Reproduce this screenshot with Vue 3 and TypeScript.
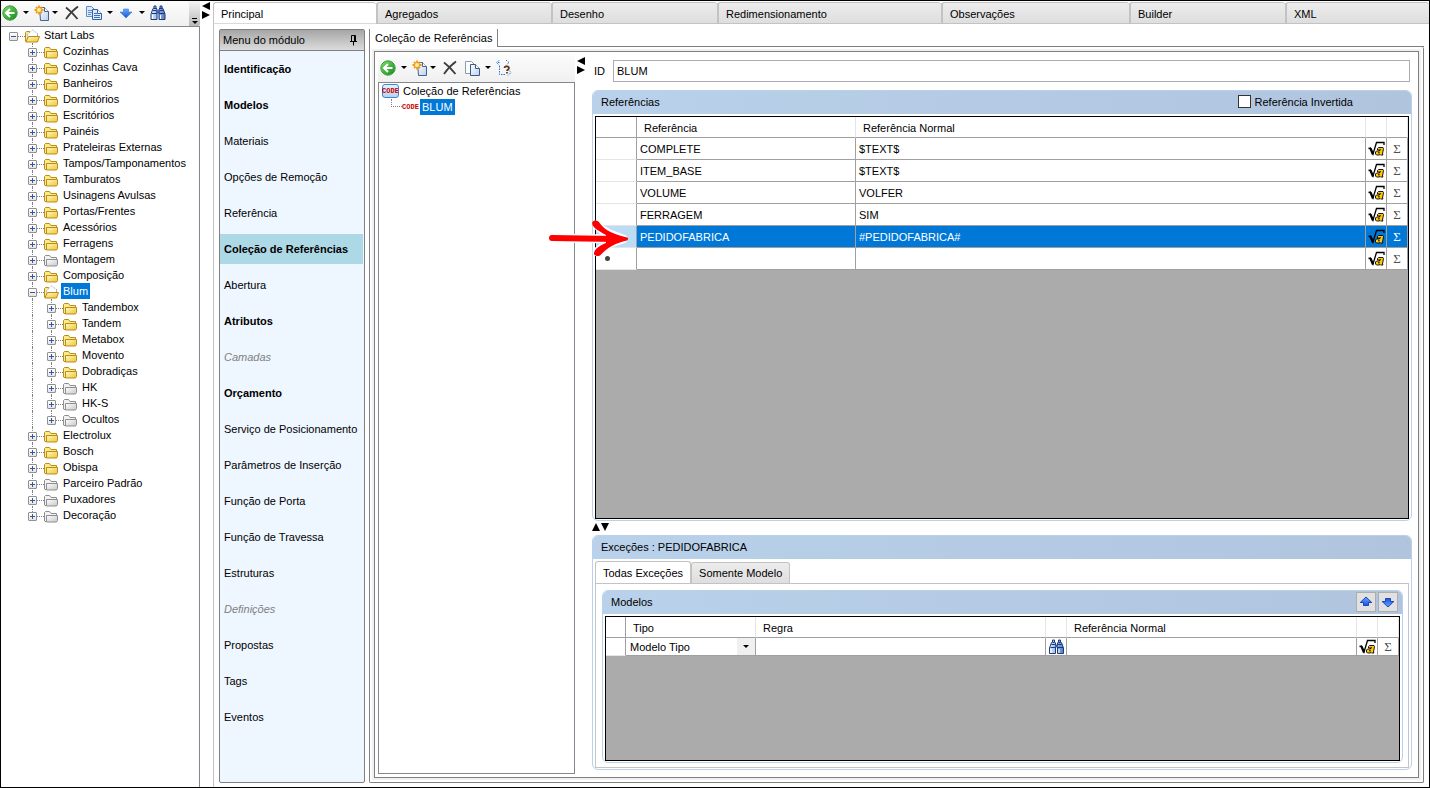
<script setup lang="ts">
import { ref } from 'vue'

interface TreeNode {
  label: string
  level: number
  icon: string
  open?: boolean
  last?: boolean
}

interface MenuItem {
  label: string
  kind?: 'bold' | 'muted'
}

interface RefRow {
  name: string
  value: string
}

const folder = (label: string, level = 1, icon = 'i-folder'): TreeNode => ({ label, level, icon })

const tree: TreeNode[] = [
  { label: 'Start Labs', level: 0, icon: 'i-folder-open', open: true },
  folder('Cozinhas'),
  folder('Cozinhas Cava'),
  folder('Banheiros'),
  folder('Dormitórios'),
  folder('Escritórios'),
  folder('Painéis'),
  folder('Prateleiras Externas'),
  folder('Tampos/Tamponamentos'),
  folder('Tamburatos'),
  folder('Usinagens Avulsas'),
  folder('Portas/Frentes'),
  folder('Acessórios'),
  folder('Ferragens'),
  folder('Montagem', 1, 'i-folder-gray'),
  folder('Composição'),
  { label: 'Blum', level: 1, icon: 'i-folder-open', open: true },
  folder('Tandembox', 2),
  folder('Tandem', 2),
  folder('Metabox', 2),
  folder('Movento', 2),
  folder('Dobradiças', 2),
  folder('HK', 2, 'i-folder-gray'),
  folder('HK-S', 2, 'i-folder-gray'),
  { label: 'Ocultos', level: 2, icon: 'i-folder-gray', last: true },
  folder('Electrolux'),
  folder('Bosch'),
  folder('Obispa'),
  folder('Parceiro Padrão', 1, 'i-folder-gray'),
  folder('Puxadores', 1, 'i-folder-gray'),
  { label: 'Decoração', level: 1, icon: 'i-folder-gray', last: true },
]
const selectedNode = ref('Blum')

const tabs = ['Principal', 'Agregados', 'Desenho', 'Redimensionamento', 'Observações', 'Builder', 'XML']
const activeTab = ref('Principal')

const menu: MenuItem[] = [
  { label: 'Identificação', kind: 'bold' },
  { label: 'Modelos', kind: 'bold' },
  { label: 'Materiais' },
  { label: 'Opções de Remoção' },
  { label: 'Referência' },
  { label: 'Coleção de Referências', kind: 'bold' },
  { label: 'Abertura' },
  { label: 'Atributos', kind: 'bold' },
  { label: 'Camadas', kind: 'muted' },
  { label: 'Orçamento', kind: 'bold' },
  { label: 'Serviço de Posicionamento' },
  { label: 'Parâmetros de Inserção' },
  { label: 'Função de Porta' },
  { label: 'Função de Travessa' },
  { label: 'Estruturas' },
  { label: 'Definições', kind: 'muted' },
  { label: 'Propostas' },
  { label: 'Tags' },
  { label: 'Eventos' },
]
const activeMenu = ref('Coleção de Referências')

const rows: RefRow[] = [
  { name: 'COMPLETE', value: '$TEXT$' },
  { name: 'ITEM_BASE', value: '$TEXT$' },
  { name: 'VOLUME', value: 'VOLFER' },
  { name: 'FERRAGEM', value: 'SIM' },
  { name: 'PEDIDOFABRICA', value: '#PEDIDOFABRICA#' },
  { name: '', value: '' },
]
const selectedRow = ref(4)

const collectionId = ref('BLUM')
const inverted = ref(false)
const modelType = ref('Modelo Tipo')
const exceptionTab = ref('Todas Exceções')
</script>

<template>
  <div class="window">
    <svg class="defs" aria-hidden="true">
      <defs>
        <linearGradient id="g-green" x1="0" y1="0" x2="1" y2="1">
          <stop offset="0" stop-color="#7fdc6a" /><stop offset="1" stop-color="#128a1c" />
        </linearGradient>
        <linearGradient id="g-folder" x1="0" y1="0" x2="1" y2="1">
          <stop offset="0" stop-color="#fffbc0" /><stop offset="1" stop-color="#f0c234" />
        </linearGradient>
        <linearGradient id="g-gray" x1="0" y1="0" x2="1" y2="1">
          <stop offset="0" stop-color="#ffffff" /><stop offset="1" stop-color="#c6c6c6" />
        </linearGradient>
        <linearGradient id="g-page" x1="0" y1="0" x2="1" y2="1">
          <stop offset="0" stop-color="#ffffff" /><stop offset="1" stop-color="#b9d0f0" />
        </linearGradient>
        <linearGradient id="g-blue" x1="0" y1="0" x2="0" y2="1">
          <stop offset="0" stop-color="#6aa6f5" /><stop offset="1" stop-color="#1757d6" />
        </linearGradient>
        <linearGradient id="g-bino" x1="0" y1="0" x2="1" y2="0">
          <stop offset="0" stop-color="#dcebfd" /><stop offset="1" stop-color="#4f7fc8" />
        </linearGradient>
      </defs>
      <symbol id="i-back" viewBox="0 0 16 16">
        <circle cx="8" cy="8" r="7.2" fill="url(#g-green)" stroke="#3b9b3a" />
        <path d="M12.5 8H4.5M8 4L4 8l4 4" fill="none" stroke="#fff" stroke-width="2" />
      </symbol>
      <symbol id="i-new" viewBox="0 0 16 16">
        <path d="M5.500 2.500h5l4 4v9h-8z" fill="url(#g-page)" stroke="#4a6487" />
        <path d="M10.500 2.500v4h4" fill="#fff" stroke="#4a6487" />
        <path d="M5 .500v9M.500 5h9M2 2l6 6M8 2L2 8" stroke="#f09a1c" stroke-width="1.800" />
        <circle cx="5" cy="5" r="2" fill="#fff3a0" />
      </symbol>
      <symbol id="i-x" viewBox="0 0 16 16">
        <path d="M2 2.500C6 5.500 10 9.500 13.500 14M14 1.500C9 5 5 9.500 2 14" fill="none" stroke="#3d3d3d" stroke-width="1.800" />
      </symbol>
      <symbol id="i-copy" viewBox="0 0 16 16">
        <path d="M.500 1.500h5l3 3v7h-8z" fill="#dce9fb" stroke="#5f8fcb" />
        <path d="M2 5.500h4M2 7.500h4M2 9.500h3" stroke="#5f8fcb" />
        <path d="M6.500 4.500h5l4 4v6h-9z" fill="#dce9fb" stroke="#2f62aa" />
        <path d="M11.500 4.500v4h4" fill="#fff" stroke="#2f62aa" />
        <path d="M8 8.500h3M8 10.500h6M8 12.500h6" stroke="#3c70b5" />
      </symbol>
      <symbol id="i-pages" viewBox="0 0 16 16">
        <path d="M1.500 1.500h6l3 3v9h-9z" fill="#fff" stroke="#8a9cb4" />
        <path d="M6.500 4.500h5l4 4v7h-9z" fill="url(#g-page)" stroke="#3f5a80" />
        <path d="M11.500 4.500v4h4" fill="#fff" stroke="#3f5a80" />
      </symbol>
      <symbol id="i-arrow" viewBox="0 0 16 16">
        <path d="M5.500 4h5v3h3.500L8 13 2 7h3.500z" fill="url(#g-blue)" stroke="#3c7be0" stroke-width=".6" />
      </symbol>
      <symbol id="i-bino" viewBox="0 0 16 16">
        <path d="M4 1h2v2l1 1v10.500H1V9l2-5.500 1-.5zM10 1h2v2l1 .500L15 9v5.500H9V4l1-1z" fill="url(#g-bino)" stroke="#1d3a7c" />
        <path d="M6.500 5.500h3v3h-3z" fill="#3a5fa8" />
        <path d="M3 5.500h3.500M2 8.500h5M9.500 5.500H13M9 8.500h5.500M4 3.500h2M10 3.500h2" stroke="#1d3a7c" />
        <path d="M2.500 10v4M10.500 10v4" stroke="#fff" />
      </symbol>
      <symbol id="i-find" viewBox="0 0 16 16">
        <g fill="none" stroke="#2f73dc" stroke-dasharray="1.500 1">
          <path d="M3.500 0L.500 2.500l3 3M10 0l3 2.500-3 3M3.500 2.500H2M3.500 6v8.500H9M12 9.500l3 3-3 3" />
        </g>
        <path d="M8.500 8c0-2.300 4.500-2.300 4.500.200 0 1.300-2 1.300-2 2.800M11 12v1.500" fill="none" stroke="#5c3418" stroke-width="1.700" />
      </symbol>
      <symbol id="i-folder" viewBox="0 0 16 16">
        <path d="M1.500 14V5.500l1-1h4l1.500 2h5.500V14.500H2z" fill="#fbe98a" stroke="#b98d1a" />
        <path d="M3.500 8.500h11v5l-1 1.500H3.500z" fill="url(#g-folder)" stroke="#b98d1a" />
      </symbol>
      <symbol id="i-folder-gray" viewBox="0 0 16 16">
        <path d="M1.500 14V5.500l1-1h4l1.500 2h5.500V14.500H2z" fill="#f2f2f2" stroke="#8e8e8e" />
        <path d="M3.500 8.500h11v5l-1 1.500H3.500z" fill="url(#g-gray)" stroke="#8e8e8e" />
      </symbol>
      <symbol id="i-folder-open" viewBox="0 0 16 16">
        <path d="M1.500 14V5.500l1-1h3l1.500 2h6.500V14.500H2z" fill="#fbe98a" stroke="#b98d1a" />
        <path d="M3.500 7.500l5-4.500 5 3.500v4h-10z" fill="#fff" stroke="#8f9cb8" stroke-dasharray="1 1" />
        <path d="M4.500 9.500h11L13.500 15H1.800z" fill="url(#g-folder)" stroke="#b98d1a" />
      </symbol>
      <symbol id="i-sqrt" viewBox="0 0 17 16">
        <path d="M.500 7.500l2-.500 2.500 6L8.500 1.500H16V4" fill="none" stroke="#000" stroke-width="1.300" />
        <path d="M2.500 7.500l2.500 6" stroke="#000" stroke-width="2.200" />
        <path d="M9.500 7.500l1-1h4.500l.500 1-1 5.500.500 1h-2.500l-.500-.500-1 .500H8.500L7.500 13v-2l1-1h3v-1h-2z" fill="#ffc90e" stroke="#000" stroke-width=".9" />
        <path d="M10 11.800h1.800M11.500 8.800h1.500" stroke="#000" />
      </symbol>
      <symbol id="i-pin" viewBox="0 0 9 12">
        <path d="M2.500 7V1.500h4V7M1 7.500h7M4.500 8v3.500M5.500 2v5" fill="none" stroke="#000" />
      </symbol>
      <symbol id="i-move" viewBox="0 0 14 14">
        <path d="M7 2l5.800 5.500H9.500V10.500h-5v-3H1.200z" fill="url(#g-blue)" stroke="#1238c0" stroke-width=".9" />
      </symbol>
    </svg>

    <aside class="explorer">
      <div class="toolbar">
        <button type="button" class="tool" aria-label="Voltar"><svg><use href="#i-back" /></svg></button>
        <button type="button" class="caret" aria-label="Histórico"></button>
        <button type="button" class="tool" aria-label="Novo"><svg><use href="#i-new" /></svg></button>
        <button type="button" class="caret tight" aria-label="Opções de novo"></button>
        <button type="button" class="tool remove" aria-label="Excluir"><svg><use href="#i-x" /></svg></button>
        <button type="button" class="tool" aria-label="Copiar"><svg><use href="#i-copy" /></svg></button>
        <button type="button" class="caret" aria-label="Opções de cópia"></button>
        <button type="button" class="tool" aria-label="Descer"><svg><use href="#i-arrow" /></svg></button>
        <button type="button" class="caret" aria-label="Opções de ordem"></button>
        <button type="button" class="tool" aria-label="Localizar"><svg><use href="#i-bino" /></svg></button>
        <button type="button" class="overflow" aria-label="Mais"></button>
      </div>
      <ul class="tree" role="tree">
        <li
          v-for="node in tree"
          :key="node.label"
          class="node"
          role="treeitem"
          :class="{ last: node.last, root: node.level === 0 }"
        >
          <span v-if="node.level > 0" class="guide"></span>
          <span v-if="node.level > 1" class="guide line"></span>
          <span class="guide branch">
            <button type="button" class="expander" :class="{ open: node.open }" :aria-label="'Expandir ' + node.label"></button>
          </span>
          <svg class="node-icon"><use :href="'#' + node.icon" /></svg>
          <span class="label" :class="{ selected: node.label === selectedNode }" @click="selectedNode = node.label">{{ node.label }}</span>
        </li>
      </ul>
    </aside>

    <div class="splitter"><i class="tri left"></i><i class="tri right"></i></div>

    <main class="module">
      <div class="tabs" role="tablist">
        <button
          v-for="tab in tabs"
          :key="tab"
          type="button"
          role="tab"
          class="tab"
          :class="{ active: tab === activeTab }"
          @click="activeTab = tab"
        >{{ tab }}</button>
      </div>

      <div class="body">
        <nav class="menu">
          <header class="menu-head">
            <span>Menu do módulo</span>
            <button type="button" class="pin" aria-label="Fixar"><svg><use href="#i-pin" /></svg></button>
          </header>
          <ul>
            <li v-for="item in menu" :key="item.label">
              <button
                type="button"
                :class="[item.kind, { active: item.label === activeMenu }]"
                @click="activeMenu = item.label"
              >{{ item.label }}</button>
            </li>
          </ul>
        </nav>

        <section class="page">
          <div class="page-tabs">
            <button type="button" class="page-tab">Coleção de Referências</button>
            <span class="page-rule"></span>
          </div>
          <div class="frame">
            <div class="frame-inner">
              <div class="collections">
                <div class="toolbar wide">
                  <button type="button" class="tool" aria-label="Voltar"><svg><use href="#i-back" /></svg></button>
                  <button type="button" class="caret" aria-label="Histórico"></button>
                  <button type="button" class="tool" aria-label="Novo"><svg><use href="#i-new" /></svg></button>
                  <button type="button" class="caret tight" aria-label="Opções de novo"></button>
                  <button type="button" class="tool remove" aria-label="Excluir"><svg><use href="#i-x" /></svg></button>
                  <button type="button" class="tool" aria-label="Copiar"><svg><use href="#i-pages" /></svg></button>
                  <button type="button" class="caret" aria-label="Opções de cópia"></button>
                  <button type="button" class="tool" aria-label="Localizar uso"><svg><use href="#i-find" /></svg></button>
                </div>
                <ul class="code-tree">
                  <li>
                    <span class="code boxed">CODE</span>
                    <span class="label">Coleção de Referências</span>
                  </li>
                  <li class="child">
                    <span class="elbow"></span>
                    <span class="code">CODE</span>
                    <span class="label selected">BLUM</span>
                  </li>
                </ul>
              </div>

              <div class="splitter inner"><i class="tri left"></i><i class="tri right"></i></div>

              <div class="detail">
                <div class="id-row">
                  <label for="collection-id">ID</label>
                  <input id="collection-id" v-model="collectionId" type="text" />
                </div>

                <section class="group grow">
                  <header class="group-head">
                    <span>Referências</span>
                    <label class="check"><input v-model="inverted" type="checkbox" />Referência Invertida</label>
                  </header>
                  <div class="grid">
                    <table class="refs">
                      <colgroup>
                        <col class="c-head" /><col class="c-name" /><col /><col class="c-icon" /><col class="c-icon" />
                      </colgroup>
                      <thead>
                        <tr><th></th><th>Referência</th><th>Referência Normal</th><th></th><th></th></tr>
                      </thead>
                      <tbody>
                        <tr v-for="(row, i) in rows" :key="i" :class="{ selected: i === selectedRow }" @click="selectedRow = i">
                          <td class="row-head">
                            <span v-if="i === rows.length - 1" class="new-mark"></span>
                            <svg v-if="i === selectedRow" class="pointer" viewBox="0 0 80 36" aria-hidden="true">
                              <g fill="none" stroke="#fff" stroke-width="9" stroke-linecap="round" stroke-linejoin="round">
                                <path d="M4 18L66 19M48 5C54 12 62 15 74 19C63 22 55 25 48 32" />
                              </g>
                              <path d="M3 18L66 19" fill="none" stroke="#f00" stroke-width="6" stroke-linecap="round" />
                              <path d="M43.500 2c2-2.500 6-1.500 7.500 1.500C56 10.500 65 14.500 78 17.500c1.500.500 1.500 2 0 3C67 23 59 27 51.500 35c-2 2-7 1-6.500-2C46 28 52 25 57 23v-8C52 12 41 7 43.500 2z" fill="#f00" />
                            </svg>
                          </td>
                          <td>{{ row.name }}</td>
                          <td>{{ row.value }}</td>
                          <td class="icon"><button type="button" aria-label="Fórmula"><svg><use href="#i-sqrt" /></svg></button></td>
                          <td class="icon"><button type="button" class="sigma">Σ</button></td>
                        </tr>
                      </tbody>
                    </table>
                  </div>
                </section>

                <div class="h-splitter"><i class="tri up"></i><i class="tri down"></i></div>

                <section class="group">
                  <header class="group-head"><span>Exceções : PEDIDOFABRICA</span></header>
                  <div class="sub-tabs" role="tablist">
                    <button
                      v-for="name in ['Todas Exceções', 'Somente Modelo']"
                      :key="name"
                      type="button"
                      role="tab"
                      :class="{ active: name === exceptionTab }"
                      @click="exceptionTab = name"
                    >{{ name }}</button>
                  </div>
                  <div class="pane">
                    <section class="group">
                      <header class="group-head">
                        <span>Modelos</span>
                        <span class="movers">
                          <button type="button" aria-label="Mover para cima"><svg><use href="#i-move" /></svg></button>
                          <button type="button" class="flip" aria-label="Mover para baixo"><svg><use href="#i-move" /></svg></button>
                        </span>
                      </header>
                      <div class="grid short">
                        <table class="models">
                          <colgroup>
                            <col class="c-slim" /><col class="c-type" /><col /><col class="c-icon" /><col /><col class="c-icon" /><col class="c-icon" />
                          </colgroup>
                          <thead>
                            <tr><th></th><th>Tipo</th><th>Regra</th><th></th><th>Referência Normal</th><th></th><th></th></tr>
                          </thead>
                          <tbody>
                            <tr>
                              <td class="row-head"></td>
                              <td class="pick">
                                <div class="pick-box">
                                  <select v-model="modelType" aria-label="Tipo"><option>Modelo Tipo</option></select>
                                  <span class="pick-caret"></span>
                                </div>
                              </td>
                              <td></td>
                              <td class="icon"><button type="button" aria-label="Localizar regra"><svg><use href="#i-bino" /></svg></button></td>
                              <td></td>
                              <td class="icon"><button type="button" aria-label="Fórmula"><svg><use href="#i-sqrt" /></svg></button></td>
                              <td class="icon"><button type="button" class="sigma">Σ</button></td>
                            </tr>
                          </tbody>
                        </table>
                      </div>
                    </section>
                  </div>
                </section>
              </div>
            </div>
          </div>
        </section>
      </div>
    </main>
  </div>
</template>

<style>
body {
  margin: 0;
  background: #fff;
}
</style>

<style scoped>
*,
*::before,
*::after {
  box-sizing: border-box;
}
.window {
  display: flex;
  min-height: 100vh;
  border: 1px solid #000;
  background: #fff;
  color: #000;
  font: 11px/16px "Liberation Sans", Arial, sans-serif;
}
.defs {
  position: absolute;
  width: 0;
  height: 0;
}
ul {
  list-style: none;
  margin: 0;
  padding: 0;
}
button,
input,
select {
  font: inherit;
  color: inherit;
}
button {
  margin: 0;
  padding: 0;
  border: 0;
  background: none;
}

/* Toolbars */
.toolbar {
  display: flex;
  align-items: center;
  height: 25px;
  padding: 0 0 2px 1px;
  background: linear-gradient(#fcfcfc, #f0f0f0);
}
.toolbar.wide {
  height: 27px;
  padding-left: 2px;
}
.tool,
.tool svg {
  display: block;
  flex: none;
  width: 16px;
  height: 16px;
}
.tool.remove {
  margin: 0 6px 0 4px;
}
.caret {
  display: flex;
  justify-content: center;
  align-items: center;
  flex: none;
  width: 16px;
  height: 16px;
}
.caret.tight {
  width: 10px;
}
.caret::before,
.overflow::after,
.pick-caret::before {
  content: "";
  border: 3px solid transparent;
  border-top-color: #000;
  border-bottom: 0;
}
.overflow {
  display: flex;
  flex-direction: column;
  justify-content: flex-end;
  align-items: center;
  align-self: flex-start;
  gap: 2px;
  width: 11px;
  height: 25px;
  margin-left: auto;
  padding-bottom: 2px;
  border-radius: 0 2px 2px 0;
  background: linear-gradient(#f4f4f4, #b8b8b8);
}
.overflow::before {
  content: "";
  width: 5px;
  height: 1px;
  background: #000;
}

/* Explorer */
.explorer {
  display: flex;
  flex-direction: column;
  flex: none;
  width: 199px;
}
.tree {
  flex: 1;
  border-top: 1px solid #828790;
  border-right: 1px solid #828790;
  padding-left: 3px;
}
.node {
  display: flex;
  height: 16px;
}
.guide {
  position: relative;
  flex: none;
  width: 19px;
}
.guide.line::before,
.guide.branch::before {
  content: "";
  position: absolute;
  left: 9px;
  top: 0;
  bottom: 0;
  border-left: 1px dotted #808080;
}
.last .guide.branch::before {
  bottom: 7px;
}
.root .guide.branch::before {
  display: none;
}
.guide.branch::after {
  content: "";
  position: absolute;
  left: 14px;
  right: -2px;
  top: 9px;
  border-top: 1px dotted #808080;
}
.expander {
  position: absolute;
  left: 5px;
  top: 5px;
  width: 9px;
  height: 9px;
  border: 1px solid #919191;
  border-radius: 1px;
  background:
    linear-gradient(#3a55a0, #3a55a0) center / 5px 1px no-repeat,
    linear-gradient(#3a55a0, #3a55a0) center / 1px 5px no-repeat,
    linear-gradient(#fff, #e4e4e4);
}
.expander.open {
  background:
    linear-gradient(#3a55a0, #3a55a0) center / 5px 1px no-repeat,
    linear-gradient(#fff, #e4e4e4);
}
.node-icon {
  flex: none;
  width: 16px;
  height: 16px;
  margin-left: 1px;
}
.label {
  padding: 0 2px;
  white-space: nowrap;
}
.node .label {
  margin-left: 2px;
}
.label.selected {
  background: #0078d7;
  color: #fff;
}

/* Splitters */
.splitter {
  display: flex;
  flex-direction: column;
  flex: none;
  width: 13px;
  padding: 1px 0 0 2px;
}
.splitter.inner {
  width: 17px;
  padding-top: 2px;
}
.tri {
  display: block;
  width: 0;
  height: 0;
  border: 4px solid transparent;
}
.tri.left {
  border-right: 8px solid #000;
  border-left: 0;
}
.tri.right {
  margin-top: 1px;
  border-left: 8px solid #000;
  border-right: 0;
}
.tri.up {
  border-bottom: 8px solid #000;
  border-top: 0;
}
.tri.down {
  border-top: 8px solid #000;
  border-bottom: 0;
}
.h-splitter {
  display: flex;
  gap: 1px;
  height: 14px;
  padding-top: 2px;
}

/* Module area */
.module {
  display: flex;
  flex-direction: column;
  flex: 1;
  min-width: 0;
  padding-top: 1px;
}
.tabs {
  display: grid;
  grid-template-columns: 163fr 175fr 166fr 224fr 188fr 156fr 144fr;
}
.tab {
  height: 22px;
  padding: 1px 7px 0;
  border: 1px solid #c3c3c3;
  border-left-width: 2px;
  border-right: 0;
  border-radius: 3px 3px 0 0;
  background: linear-gradient(#ececec, #dedede);
  text-align: left;
}
.tab.active {
  border-left-width: 1px;
  border-bottom-color: #d9d9d9;
  background: #fff;
}
.body {
  display: flex;
  flex: 1;
  gap: 4px;
  padding: 5px 5px 4px 5px;
  border-left: 1px solid #c3c3c3;
}
.menu {
  display: flex;
  flex-direction: column;
  flex: none;
  width: 146px;
  border: 1px solid #808080;
  border-radius: 2px;
  background: #eef6ff;
}
.menu-head {
  display: flex;
  justify-content: space-between;
  align-items: center;
  height: 21px;
  padding: 0 6px 0 3px;
  border-bottom: 1px solid #808080;
  background: linear-gradient(#a6a6a6, #dcdcdc);
}
.pin,
.pin svg {
  display: block;
  width: 9px;
  height: 12px;
}
.menu ul {
  display: grid;
  gap: 6px;
  padding-top: 3px;
}
.menu li button {
  display: block;
  width: calc(100% - 1px);
  height: 30px;
  padding: 0 4px;
  text-align: left;
  white-space: nowrap;
}
.menu li .bold {
  font-weight: bold;
}
.menu li .muted {
  color: #808080;
  font-style: italic;
}
.menu li .active {
  background: #add8e6;
}

/* Page */
.page {
  display: flex;
  flex-direction: column;
  flex: 1;
  min-width: 0;
}
.page-tabs {
  display: flex;
  height: 18px;
}
.page-tab {
  padding: 0 5px;
  border-left: 1px solid #808080;
  border-right: 1px solid #808080;
}
.page-rule {
  flex: 1;
  border-bottom: 1px solid #808080;
}
.frame {
  display: flex;
  flex: 1;
  padding: 4px;
  border: 1px solid #808080;
  border-top: 0;
  border-radius: 0 2px 2px 2px;
  background: #fff;
}
.frame-inner {
  display: flex;
  flex: 1;
  min-width: 0;
  padding: 3px 6px 3px 3px;
  border: 1px solid #808080;
  outline: 2px solid #f0f0f0;
}
.collections {
  display: flex;
  flex-direction: column;
  flex: none;
  width: 197px;
}
.code-tree {
  flex: 1;
  padding: 0 3px;
  border: 1px solid #828790;
}
.code-tree li {
  display: flex;
  align-items: center;
  height: 16px;
}
.code {
  flex: none;
  width: 17px;
  color: #c80000;
  font: bold 7px/12px "Liberation Mono", monospace;
  text-align: center;
}
.code.boxed {
  display: flex;
  justify-content: center;
  height: 14px;
  margin-right: 2px;
  border: 1px solid #3f86cf;
  border-radius: 3px;
  background: linear-gradient(#e6f1fc, #b4d3f1);
}
.child {
  padding-left: 9px;
}
.child .label {
  margin-left: 1px;
}
.elbow {
  width: 11px;
  height: 8px;
  align-self: flex-start;
  border-left: 1px dotted #808080;
  border-bottom: 1px dotted #808080;
}

.detail {
  display: flex;
  flex-direction: column;
  flex: 1;
  min-width: 0;
  padding: 5px 0 4px;
}
.id-row {
  display: flex;
  align-items: center;
  gap: 8px;
  height: 22px;
  margin: 0 2px 8px;
}
.id-row input {
  flex: 1;
  min-width: 0;
  height: 22px;
  padding: 0 3px;
  border: 1px solid #abadb3;
  background: #fff;
}
.group {
  display: flex;
  flex-direction: column;
  padding: 0 2px 1px;
  border: 1px solid #b9d1ea;
  border-radius: 6px;
}
.group.grow {
  flex: 1;
}
.group-head {
  display: flex;
  justify-content: space-between;
  align-items: center;
  height: 23px;
  margin: 0 -2px 2px;
  padding: 0 8px 2px;
  border-radius: 5px 5px 0 0;
  background: linear-gradient(90deg, #b9d1ea, #b0c4de);
}
.check {
  display: flex;
  align-items: center;
  gap: 4px;
  margin-right: 50px;
}
.check input {
  appearance: none;
  width: 13px;
  height: 13px;
  margin: 0;
  border: 1px solid #333;
  background: #fff;
}

/* Grids */
.grid {
  flex: 1;
  border: 1px solid #000;
  background: #ababab;
}
.grid.short {
  min-height: 145px;
}
table {
  width: 100%;
  table-layout: fixed;
  border-collapse: separate;
  border-spacing: 0;
}
.c-head {
  width: 41px;
}
.c-name {
  width: 219px;
}
.c-icon {
  width: 21px;
}
.c-slim {
  width: 20px;
}
.c-type {
  width: 130px;
}
th,
td {
  height: 22px;
  padding: 0 3px;
  border-right: 1px solid #a0a0a0;
  border-bottom: 1px solid #a0a0a0;
  background: #fff;
  text-align: left;
  font-weight: normal;
  white-space: nowrap;
}
th {
  height: 21px;
  padding: 2px 7px 0;
  border-right-color: #e5e5e5;
}
th:first-child {
  border-right-color: #a0a0a0;
}
.models td {
  height: 18px;
}
td.row-head {
  position: relative;
  border-bottom-color: #e5e5e5;
}
td.icon {
  padding: 0;
}
.icon button {
  display: flex;
  align-items: center;
  justify-content: center;
  width: 100%;
  height: 17px;
}
.icon svg {
  display: block;
  width: 17px;
  height: 16px;
}
.icon .sigma {
  color: #505050;
  font: 13px/16px "Liberation Serif", serif;
}
tr.selected td {
  background: #0078d7;
  color: #fff;
}
tr.selected td.row-head {
  background: #bcdcf4;
}
tr.selected .sigma {
  color: #fff;
}
.pointer {
  position: absolute;
  left: -47px;
  top: -6px;
  width: 80px;
  height: 36px;
  z-index: 1;
}
.new-mark {
  display: block;
  width: 5px;
  height: 5px;
  margin-left: 6px;
  border-radius: 50%;
  background: #444;
}

/* Exceptions */
.sub-tabs {
  display: flex;
  align-items: flex-end;
  height: 22px;
}
.sub-tabs button {
  height: 21px;
  padding: 0 7px;
  border: 1px solid #c3c3c3;
  border-bottom: 0;
  border-radius: 3px 3px 0 0;
  background: linear-gradient(#ececec, #dedede);
}
.sub-tabs .active {
  height: 22px;
  background: #fff;
}
.pane {
  padding: 6px 5px 4px 6px;
  border: 1px solid #c3c3c3;
}
.movers {
  display: flex;
  gap: 2px;
  margin-right: -4px;
}
.movers button {
  display: flex;
  align-items: center;
  justify-content: center;
  width: 20px;
  height: 20px;
  border: 1px solid #adadad;
  background: #e1e1e1;
}
.movers svg {
  width: 14px;
  height: 14px;
}
.movers .flip svg {
  transform: rotate(180deg);
}
td.pick {
  padding: 0;
}
.pick-box {
  display: flex;
  height: 17px;
}
.pick select {
  appearance: none;
  flex: 1;
  min-width: 0;
  height: 17px;
  padding: 0 4px;
  border: 0;
  background: #fff;
}
.pick-caret {
  display: flex;
  align-items: center;
  justify-content: center;
  width: 18px;
  background: #f0f0f0;
}
</style>
